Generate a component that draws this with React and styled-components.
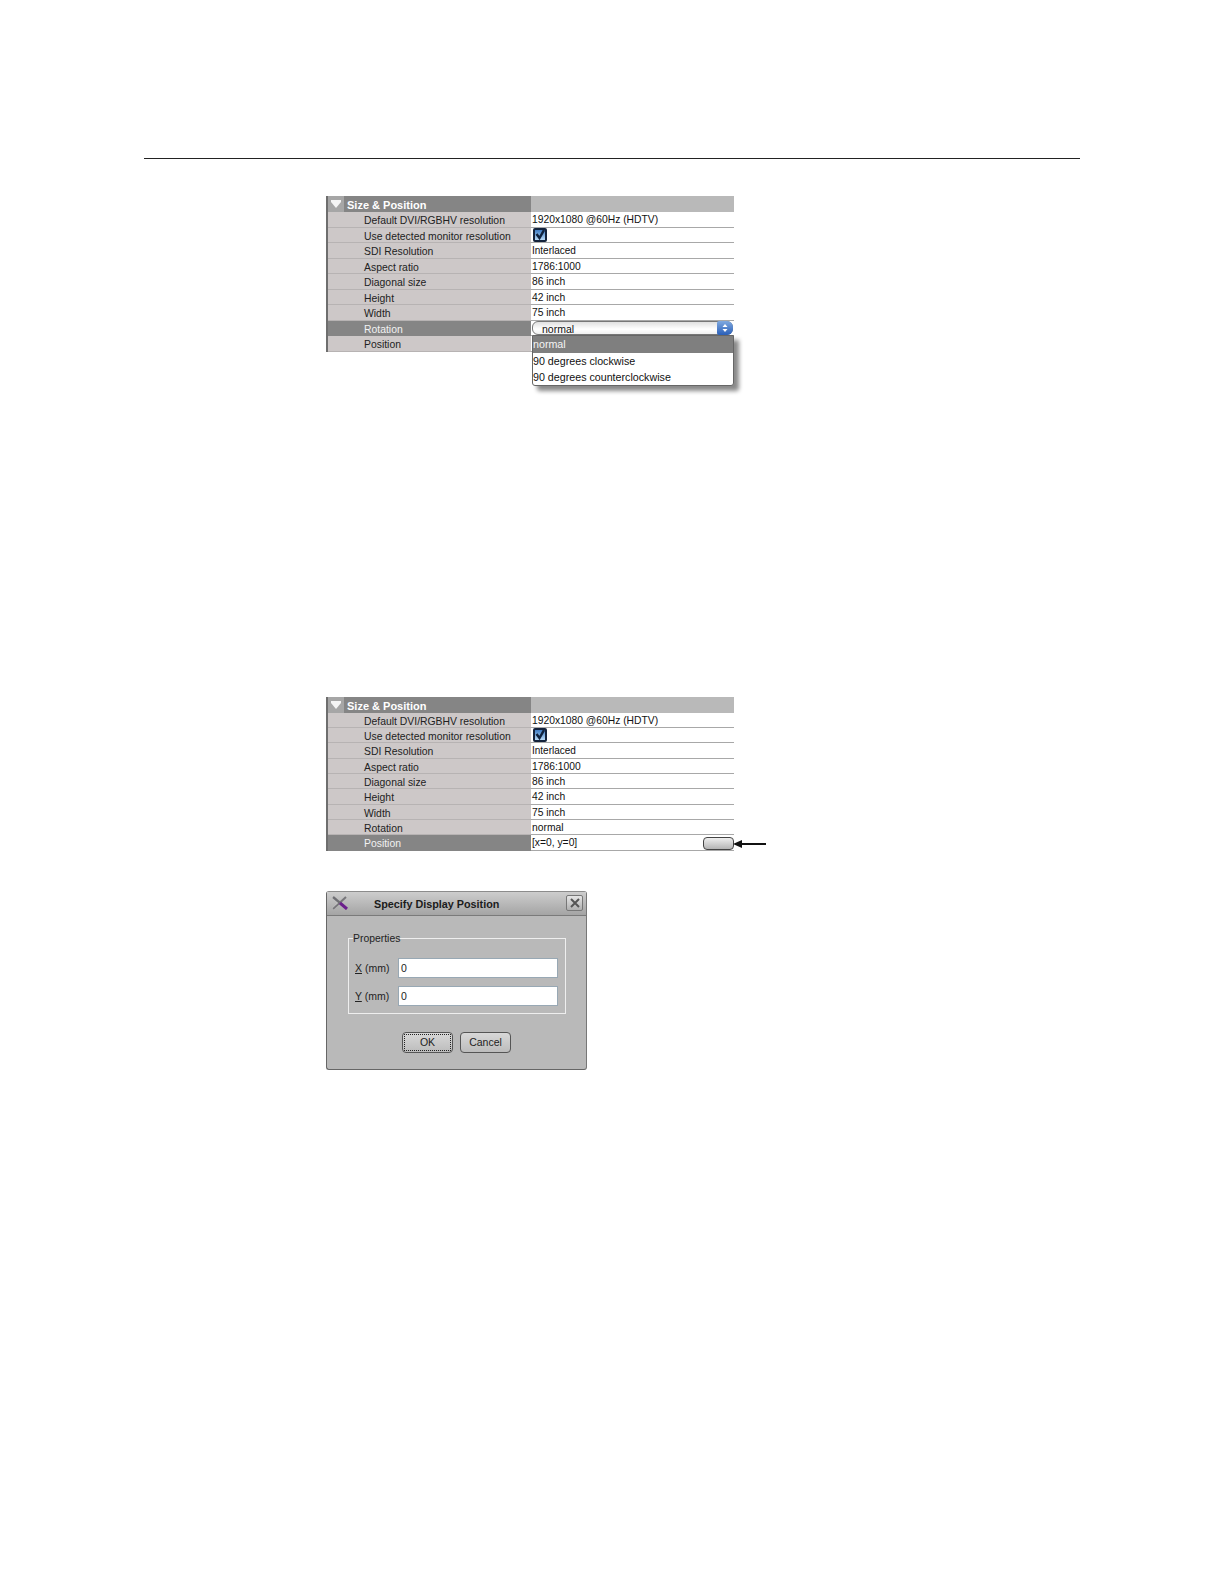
import React from "react";
import styled, { createGlobalStyle } from "styled-components";

const GlobalStyle = createGlobalStyle`
  html, body {
    margin: 0;
    padding: 0;
    background: #fff;
    font-family: "Liberation Sans", Arial, sans-serif;
  }
`;

const Page = styled.div`
  width: 1224px;
  height: 1584px;
  padding-top: 158px;
  box-sizing: border-box;
  overflow: hidden;
`;

const Rule = styled.div`
  width: 936px;
  height: 1px;
  margin-left: 144px;
  background: #222;
`;

const Content = styled.div`
  margin-left: 326px;
  display: flex;
  flex-direction: column;
  align-items: flex-start;
`;

const Sheet = styled.div`
  position: relative;
  width: 408px;
  margin-top: ${p => p.$top}px;
  border-left: 2px solid #6e6e6e;
  box-sizing: border-box;
`;

const HeaderRow = styled.div`
  display: grid;
  grid-template-columns: 203px 1fr;
  height: 16px;
  background: #b9b9b9;
`;

const HeaderTitle = styled.div`
  display: flex;
  background: #858585;
`;

const Toggle = styled.div`
  width: 16px;
  background: #a6a6a6;
  display: flex;
  justify-content: center;
  padding-top: 4px;
  box-sizing: border-box;

  svg {
    display: block;
  }
`;

const Title = styled.div`
  padding: 3px 0 0 3px;
  font-size: 11px;
  line-height: 13px;
  font-weight: bold;
  color: #fff;
`;

const Row = styled.div`
  display: grid;
  grid-template-columns: 203px 1fr;
  grid-template-rows: minmax(0, 1fr);
  height: ${p => p.$height}px;
`;

const Label = styled.div`
  min-height: 0;
  padding-left: 36px;
  font-size: 10.4px;
  line-height: 18px;
  white-space: nowrap;
  box-sizing: border-box;
  color: ${p => (p.$active ? "#f2f2f2" : "#222")};
  background: ${p => (p.$active ? "#858585" : "#cdc8c8")};
  border-bottom: 1px solid ${p => (p.$active ? "#858585" : "#b7b3b3")};
`;

const Value = styled.div`
  position: relative;
  min-height: 0;
  padding-left: 1px;
  font-size: ${p => (p.$small ? 10 : 10.3)}px;
  line-height: 16px;
  white-space: nowrap;
  box-sizing: border-box;
  color: #111;
  background: #fff;
  border-bottom: 1px solid #a8a8a8;
`;

const CheckBox = styled.div`
  width: 14px;
  height: 14px;
  margin-left: 1px;
  border: 2px solid #14233c;
  border-radius: 2px;
  background: linear-gradient(#3f7cc4, #b7d9f6);
  box-sizing: border-box;

  svg {
    display: block;
  }
`;

const Select = styled.div`
  position: absolute;
  left: 1px;
  right: 1px;
  top: 0;
  height: 14.5px;
  padding-left: 9px;
  border: 1px solid #777;
  border-radius: 6px;
  background: linear-gradient(#e0e0e0, #fff 60%, #f0f0f0);
  box-sizing: border-box;
  font-size: 10.5px;
  line-height: 14px;
`;

const Spinner = styled.div`
  position: absolute;
  right: -1px;
  top: -1px;
  width: 16px;
  height: 14.5px;
  border-radius: 2px 6px 6px 2px;
  background: linear-gradient(#7fa9e0, #2a5fb8);
  display: flex;
  align-items: center;
  justify-content: center;
`;

const Menu = styled.div`
  position: absolute;
  left: 204px;
  top: 139px;
  width: 202px;
  height: 51px;
  border: 1px solid #666;
  border-radius: 0 0 3px 3px;
  background: #fff;
  box-sizing: border-box;
  box-shadow: 5px 5px 4px #8a8a8a;
`;

const MenuItem = styled.div`
  height: 16.5px;
  font-size: 10.7px;
  line-height: 16px;
  white-space: nowrap;
  color: ${p => (p.$selected ? "#f4f4f4" : "#111")};
  background: ${p => (p.$selected ? "#7f7f7f" : "transparent")};
`;

const EditButton = styled.div`
  position: absolute;
  right: 0;
  top: 2px;
  width: 31px;
  height: 13px;
  border: 1px solid #444;
  border-radius: 4px;
  background: linear-gradient(#efefef, #b4b4b4);
  box-sizing: border-box;
`;

const ArrowMark = styled.svg`
  position: absolute;
  left: 405px;
  top: 142px;
  display: block;
`;

const Dialog = styled.div`
  width: 261px;
  height: 179px;
  margin-top: 40px;
  border: 1px solid #8c8c8c;
  border-left-color: #666;
  border-bottom-color: #666;
  border-right-color: #777;
  border-radius: 3px;
  background: #b9b9b9;
  box-sizing: border-box;
  display: flex;
  flex-direction: column;
`;

const TitleBar = styled.div`
  height: 24px;
  flex: none;
  display: grid;
  grid-template-columns: 42px 1fr 17px;
  align-items: center;
  padding: 0 3px 0 5px;
  border-bottom: 1px solid #7a7a7a;
  background: linear-gradient(#cdcdcd, #a4a4a4);
  box-sizing: border-box;

  svg {
    display: block;
  }
`;

const DialogTitle = styled.div`
  padding-top: 2px;
  font-size: 10.8px;
  font-weight: bold;
  color: #1c1c1c;
`;

const CloseButton = styled.div`
  width: 17px;
  height: 16px;
  border: 1px solid #777;
  border-radius: 2px;
  background: linear-gradient(#e6e6e6, #b0b0b0);
  box-sizing: border-box;
  display: flex;
  align-items: center;
  justify-content: center;
`;

const Fieldset = styled.fieldset`
  margin: 17px 20px 0 21px;
  padding: 13px 7px 0 6px;
  height: 81px;
  border: 1px solid #eee;
  box-sizing: border-box;
  display: flex;
  flex-direction: column;
  gap: 8px;
  min-width: 0;
`;

const Legend = styled.legend`
  padding: 0;
  margin-left: -2px;
  font-size: 10.4px;
  line-height: 12px;
  color: #222;
`;

const FieldRow = styled.div`
  display: flex;
  align-items: center;
  height: 20px;
`;

const FieldLabel = styled.label`
  width: 43px;
  font-size: 10.5px;
  color: #222;
  white-space: nowrap;

  u {
    text-decoration: underline;
  }
`;

const FieldInput = styled.div`
  flex: 1;
  height: 20px;
  padding-left: 2px;
  border: 1px solid #98a8b4;
  background: #fff;
  box-sizing: border-box;
  font-size: 10.5px;
  line-height: 18px;
  color: #222;
`;

const Buttons = styled.div`
  display: flex;
  justify-content: center;
  gap: 7px;
  margin-top: 18px;
`;

const Button = styled.div`
  width: 51px;
  height: 21px;
  border: 1px solid #555;
  border-radius: 4px;
  background: linear-gradient(#d8d8d8, #bcbcbc);
  box-sizing: border-box;
  font-size: 10.5px;
  color: #222;
  display: flex;
  align-items: center;
  justify-content: center;
  position: relative;

  &::after {
    content: "";
    display: ${p => (p.$focused ? "block" : "none")};
    position: absolute;
    inset: 1px;
    border: 1px dotted #222;
  }
`;

const Triangle = () => (
  <svg width="10" height="8" viewBox="0 0 10 8">
    <path d="M0 0h10v2L5 8 0 2z" fill="#f4f4f4" />
  </svg>
);

const Check = () => (
  <svg width="10" height="10" viewBox="0 0 10 10">
    <path d="M1.5 4 4.5 8 9 0" fill="none" stroke="#10233f" strokeWidth="2.4" />
  </svg>
);

const rows = [
  { label: "Default DVI/RGBHV resolution", value: "1920x1080 @60Hz (HDTV)" },
  { label: "Use detected monitor resolution", check: true },
  { label: "SDI Resolution", value: "Interlaced", small: true },
  { label: "Aspect ratio", value: "1786:1000" },
  { label: "Diagonal size", value: "86 inch" },
  { label: "Height", value: "42 inch" },
  { label: "Width", value: "75 inch" },
  { label: "Rotation", value: "normal" },
  { label: "Position", value: "[x=0, y=0]" }
];

function PropertySheet({ top, rowHeight, active, open, children }) {
  return (
    <Sheet $top={top}>
      <HeaderRow>
        <HeaderTitle>
          <Toggle>
            <Triangle />
          </Toggle>
          <Title>Size &amp; Position</Title>
        </HeaderTitle>
      </HeaderRow>
      {rows.map(row => {
        const isActive = row.label === active;
        // with the menu open the select replaces Rotation and the menu covers Position
        const showValue = !(open && (row.label === "Rotation" || row.label === "Position"));
        return (
          <Row key={row.label} $height={rowHeight}>
            <Label $active={isActive}>{row.label}</Label>
            <Value $small={row.small}>
              {row.check ? (
                <CheckBox>
                  <Check />
                </CheckBox>
              ) : (
                showValue && row.value
              )}
              {open && isActive && (
                <Select>
                  normal
                  <Spinner>
                    <svg width="6" height="10" viewBox="0 0 6 10">
                      <path d="M3 1 5.5 4H.5zM3 9 .5 6h5z" fill="#fff" />
                    </svg>
                  </Spinner>
                </Select>
              )}
              {!open && isActive && <EditButton />}
            </Value>
          </Row>
        );
      })}
      {children}
    </Sheet>
  );
}

export default function App() {
  return (
    <Page>
      <GlobalStyle />
      <Rule />
      <Content>
        <PropertySheet top={37} rowHeight={15.52} active="Rotation" open>
          <Menu>
            <MenuItem $selected>normal</MenuItem>
            <MenuItem>90 degrees clockwise</MenuItem>
            <MenuItem>90 degrees counterclockwise</MenuItem>
          </Menu>
        </PropertySheet>
        <PropertySheet top={345} rowHeight={15.33} active="Position">
          <ArrowMark width="33" height="10" viewBox="0 0 33 10">
            <path d="M0 5 9 1v3h24v2H9v3z" fill="#111" />
          </ArrowMark>
        </PropertySheet>
        <Dialog>
          <TitleBar>
            <svg width="16" height="14" viewBox="0 0 16 14">
              <path d="M1 1 7 7 1 13" fill="none" stroke="#e4e4e4" strokeWidth="2.4" />
              <path d="M1 13 14 1" fill="none" stroke="#77767a" strokeWidth="2" />
              <path d="M1 1 8 7" fill="none" stroke="#6f6f74" strokeWidth="2.4" />
              <path d="M8 7 15 13" fill="none" stroke="#6b1f8c" strokeWidth="3" />
            </svg>
            <DialogTitle>Specify Display Position</DialogTitle>
            <CloseButton>
              <svg width="10" height="10" viewBox="0 0 10 10">
                <path d="M1 1l8 8M9 1l-8 8" stroke="#555" strokeWidth="2" />
              </svg>
            </CloseButton>
          </TitleBar>
          <Fieldset>
            <Legend>Properties</Legend>
            <FieldRow>
              <FieldLabel>
                <u>X</u> (mm)
              </FieldLabel>
              <FieldInput>0</FieldInput>
            </FieldRow>
            <FieldRow>
              <FieldLabel>
                <u>Y</u> (mm)
              </FieldLabel>
              <FieldInput>0</FieldInput>
            </FieldRow>
          </Fieldset>
          <Buttons>
            <Button $focused>OK</Button>
            <Button>Cancel</Button>
          </Buttons>
        </Dialog>
      </Content>
    </Page>
  );
}
